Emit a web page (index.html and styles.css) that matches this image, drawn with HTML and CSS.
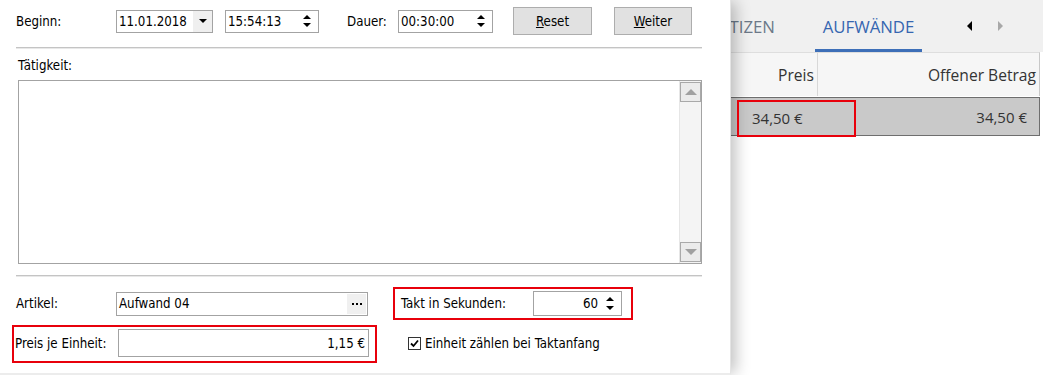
FILE: index.html
```html
<!DOCTYPE html>
<html>
<head>
    <meta charset="utf-8">
    <title>Aufwand erfassen</title>
    <link rel="stylesheet" href="styles.css">
</head>
<body>
<div class="screen">

    <!-- Erfassungsdialog -->
    <div class="dialog">
        <div class="top-row">
            <span class="lbl lbl-beginn">Beginn:</span>
            <div class="field f-date">
                <span class="val">11.01.2018</span>
                <span class="drop"><i class="tri-down"></i></span>
            </div>
            <div class="field f-time">
                <span class="val">15:54:13</span>
                <span class="spin"><i class="tri-up"></i><i class="tri-down"></i></span>
            </div>
            <span class="lbl lbl-dauer">Dauer:</span>
            <div class="field f-dur">
                <span class="val">00:30:00</span>
                <span class="spin"><i class="tri-up"></i><i class="tri-down"></i></span>
            </div>
            <button class="btn btn-reset"><u>R</u>eset</button>
            <button class="btn btn-weiter"><u>W</u>eiter</button>
        </div>

        <div class="sep sep-top"></div>

        <div class="lbl lbl-taet">Tätigkeit:</div>
        <div class="memo">
            <div class="memo-text"></div>
            <div class="vscroll">
                <span class="sb-btn"><i class="tri-up grey"></i></span>
                <span class="sb-track"></span>
                <span class="sb-btn"><i class="tri-down grey"></i></span>
            </div>
        </div>

        <div class="sep sep-bottom"></div>

        <div class="bottom">
            <div class="cell artikel">
                <span class="lbl">Artikel:</span>
                <div class="field f-art">
                    <span class="val">Aufwand 04</span>
                    <span class="dots"><i></i><i></i><i></i></span>
                </div>
            </div>
            <div class="cell takt mark">
                <span class="lbl">Takt in Sekunden:</span>
                <div class="field f-takt">
                    <span class="val num">60</span>
                    <span class="spin"><i class="tri-up"></i><i class="tri-down"></i></span>
                </div>
            </div>
            <div class="cell preis mark">
                <span class="lbl">Preis je Einheit:</span>
                <div class="field f-preis">
                    <span class="val num">1,15 €</span>
                </div>
            </div>
            <div class="cell check">
                <span class="cb">
                    <svg width="9" height="9" viewBox="0 0 9 9"><path d="M1 4.5 L3.5 7 L8 1.5" fill="none" stroke="#000" stroke-width="1.8"/></svg>
                </span>
                <span class="lbl">Einheit zählen bei Taktanfang</span>
            </div>
        </div>
    </div>

    <!-- Seitenleiste mit Aufwänden -->
    <div class="side">
        <div class="tabs">
            <div class="tab-cut"><span class="tab">NOTIZEN</span></div>
            <span class="tab active">AUFWÄNDE</span>
            <span class="arrows">
                <i class="arr-left"></i>
                <i class="arr-right"></i>
            </span>
        </div>
        <div class="grid-head">
            <div class="col c-preis">Preis</div>
            <div class="col c-offen">Offener Betrag</div>
        </div>
        <div class="grid-row">
            <div class="col c-preis"><span class="sel">34,50 €</span></div>
            <div class="col c-offen">34,50 €</div>
        </div>
    </div>

</div>
</body>
</html>
```

FILE: styles.css
```css
html,
body {
    margin: 0;
    height: 100%;
    background: #fff;
}

.screen {
    display: flex;
    height: 375px;
    overflow: hidden;
}

/* ---------- dialog ---------- */

.dialog {
    position: relative;
    z-index: 1;
    width: 730px;
    height: 373px;
    flex: none;
    background: #fff;
    border-right: 1px solid #e4e4e4;
    border-bottom: 2px solid #ececec;
    box-shadow: 7px 0 14px -2px rgba(0, 0, 0, 0.24);
    font-family: "DejaVu Sans Condensed", "DejaVu Sans", sans-serif;
    font-stretch: condensed;
    font-size: 13.2px;
    color: #000;
}

.lbl {
    white-space: nowrap;
}

.top-row {
    display: flex;
    align-items: center;
    height: 28px;
    padding: 7px 0 0 16px;
}

.lbl-beginn {
    width: 100px;
}

.lbl-dauer {
    width: 51px;
    margin-left: 28px;
}

.field {
    display: flex;
    align-items: stretch;
    box-sizing: border-box;
    height: 23px;
    border: 1px solid #a3a3a3;
    background: #fff;
}

.field .val {
    flex: 1;
    display: flex;
    align-items: center;
    padding-left: 2px;
    white-space: nowrap;
}

.field .val.num {
    justify-content: flex-end;
    padding: 0 3px 0 0;
}

.f-date {
    width: 97px;
}

.f-time {
    width: 94px;
    margin-left: 12px;
}

.f-dur {
    width: 95px;
}

.drop {
    width: 19px;
    display: flex;
    align-items: center;
    justify-content: center;
    background: #efefef;
}

.spin {
    width: 18px;
    margin-right: 2px;
    display: flex;
    flex-direction: column;
    align-items: center;
    justify-content: space-around;
    padding: 3px 0;
    box-sizing: border-box;
}

.tri-down,
.tri-up {
    display: block;
    width: 0;
    height: 0;
    border-left: 4px solid transparent;
    border-right: 4px solid transparent;
}

.tri-down {
    border-top: 4px solid #000;
}

.tri-up {
    border-bottom: 4px solid #000;
}

.tri-down.grey {
    border-top-color: #a0a0a0;
    border-left-width: 6px;
    border-right-width: 6px;
    border-top-width: 6px;
}

.tri-up.grey {
    border-bottom-color: #a0a0a0;
    border-left-width: 6px;
    border-right-width: 6px;
    border-bottom-width: 6px;
}

.btn {
    box-sizing: border-box;
    height: 28px;
    background: #e1e1e1;
    border: 1px solid #adadad;
    font: inherit;
    color: #000;
    padding: 0;
}

.btn-reset {
    width: 79px;
    margin-left: 20px;
}

.btn-weiter {
    width: 78px;
    margin-left: 22px;
}

.sep {
    height: 1px;
    width: 686px;
    margin-left: 16px;
    background: #c4c4c4;
    border-bottom: 1px solid #e8e8e8;
}

.sep-top {
    margin-top: 12px;
}

.lbl-taet {
    margin: 9px 0 0 18px;
    line-height: 16px;
}

.memo {
    display: flex;
    box-sizing: border-box;
    width: 684px;
    height: 184px;
    margin: 6px 0 0 18px;
    border: 1px solid #a3a3a3;
    background: #fff;
}

.memo-text {
    flex: 1;
}

.vscroll {
    width: 21px;
    display: flex;
    flex-direction: column;
    background: #f4f4f4;
    background-image: radial-gradient(#e2e2e2 0.6px, transparent 0.7px);
    background-size: 2px 2px;
    border-left: 1px solid #e6e6e6;
}

.sb-btn {
    height: 20px;
    margin: 1px 0;
    display: flex;
    align-items: center;
    justify-content: center;
    background: #ebebeb;
    border: 1px solid #a9a9a9;
    box-sizing: border-box;
}

.sb-track {
    flex: 1;
}

.sep-bottom {
    margin-top: 11px;
}

.bottom {
    display: grid;
    grid-template-columns: 365px 240px;
    grid-template-rows: 33px 38px;
    column-gap: 16px;
    row-gap: 5px;
    margin: 10px 0 0 12px;
}

.cell {
    display: flex;
    align-items: center;
    box-sizing: border-box;
}

.mark {
    border: 2px solid #e8000b;
}

.artikel {
    padding-left: 4px;
}

.artikel .lbl {
    width: 100px;
}

.f-art {
    width: 252px;
    height: 24px;
}

.dots {
    width: 19px;
    margin: 1px;
    display: flex;
    align-items: center;
    justify-content: center;
    gap: 2px;
    background: #f0f0f0;
}

.dots i {
    width: 2px;
    height: 2px;
    background: #000;
}

.takt {
    padding-left: 6px;
}

.takt .lbl {
    width: 132px;
}

.f-takt {
    width: 89px;
    height: 25px;
}

.preis {
    padding: 0 6px 2px 1px;
}

.preis .lbl {
    width: 103px;
}

.f-preis {
    width: 252px;
    height: 28px;
}

.check {
    padding: 0 0 2px 15px;
}

.cb {
    display: flex;
    align-items: center;
    justify-content: center;
    box-sizing: border-box;
    width: 13px;
    height: 13px;
    border: 1px solid #333;
    background: #fff;
    margin-right: 4px;
}

/* ---------- Seitenleiste ---------- */

.side {
    flex: 1;
    min-width: 0;
    overflow: hidden;
    font-family: "Open Sans", "Noto Sans", sans-serif;
    color: #333;
    background: #fff;
}

.tabs {
    display: flex;
    align-items: stretch;
    height: 52px;
    background: #f0f0f0;
}

.tab {
    display: flex;
    align-items: center;
    justify-content: center;
    font-size: 16.8px;
    white-space: nowrap;
    color: #6c7888;
    padding: 0 8px;
}

.tab-cut {
    width: 52px;
    display: flex;
    justify-content: flex-end;
    overflow: hidden;
}

.tab.active {
    width: 107px;
    box-sizing: border-box;
    margin-left: 32px;
    padding: 3px 0 0;
    color: #3666b0;
    border-bottom: 3px solid #3d6fb8;
}

.arrows {
    display: flex;
    align-items: center;
    margin-left: 45px;
    gap: 26px;
}

.arr-left,
.arr-right {
    width: 0;
    height: 0;
    border-top: 5px solid transparent;
    border-bottom: 5px solid transparent;
}

.arr-left {
    border-right: 5px solid #000;
}

.arr-right {
    border-left: 5px solid #a8a8a8;
}

.grid-head,
.grid-row {
    display: flex;
    width: 309px;
    box-sizing: border-box;
    border-right: 1px solid #c8c8c8;
}

.grid-head {
    height: 44px;
    background: #f6f6f6;
    border-top: 1px solid #dedede;
    font-size: 15.6px;
}

.grid-row {
    height: 39px;
    margin-top: 1px;
    background: #c9c9c9;
    border-top: 1px solid #6e6e6e;
    border-bottom: 1px solid #6e6e6e;
    border-right-color: #6e6e6e;
    font-size: 15px;
}

.col {
    display: flex;
    align-items: center;
    justify-content: flex-end;
    box-sizing: border-box;
    white-space: nowrap;
}

.c-preis {
    width: 87px;
    padding-right: 3px;
}

.grid-head .c-preis {
    border-right: 1px solid #d8d8d8;
}

.c-offen {
    flex: 1;
    padding-right: 3px;
}

.grid-row .c-preis {
    justify-content: flex-start;
    padding: 0;
    overflow: visible;
}

.grid-row .c-offen {
    padding-right: 12px;
}

.sel {
    display: flex;
    align-items: center;
    box-sizing: border-box;
    flex: none;
    width: 119px;
    height: 37px;
    margin: 3px 0 0 6px;
    padding-left: 13px;
    border: 2px solid #e8000b;
    position: relative;
    z-index: 1;
}
```
